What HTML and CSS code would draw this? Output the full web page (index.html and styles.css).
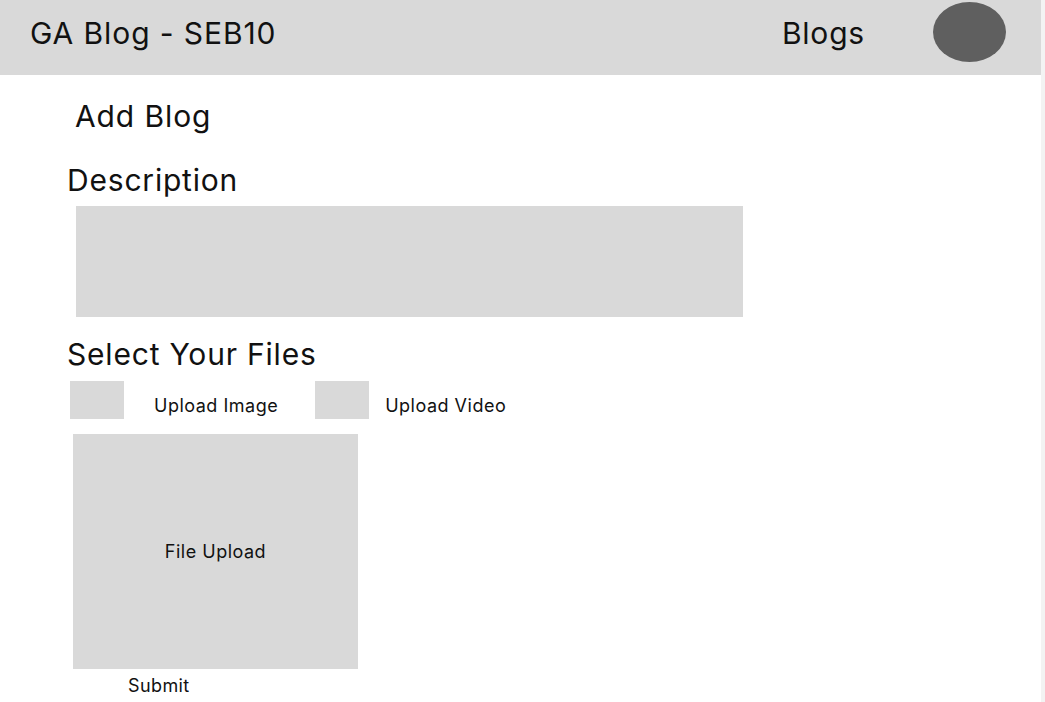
FILE: index.html
```html
<!DOCTYPE html>
<html lang="en">
<head>
<meta charset="utf-8">
<title>GA Blog - SEB10</title>
<link rel="stylesheet" href="styles.css">
</head>
<body>
<div class="page">
  <header class="topbar">
    <div class="brand">GA Blog - SEB10</div>
    <nav class="nav">
      <a class="nav-link">Blogs</a>
      <div class="avatar"></div>
    </nav>
  </header>
  <main class="content">
    <h1 class="page-title">Add Blog</h1>
    <h2 class="section-title">Description</h2>
    <div class="description-box"></div>
    <h2 class="section-title files-title">Select Your Files</h2>
    <div class="upload-options">
      <div class="option-box"></div>
      <span class="option-label label-image">Upload Image</span>
      <div class="option-box"></div>
      <span class="option-label label-video">Upload Video</span>
    </div>
    <div class="file-upload">File Upload</div>
    <div class="submit">Submit</div>
  </main>
</div>
</body>
</html>
```

FILE: styles.css
```css
html {
  background: #f3f3f3;
}
body {
  margin: 0;
  font-family: Inter, "Noto Sans", sans-serif;
  color: #111;
}
.page {
  width: 1041px;
  min-height: 702px;
  background: #ffffff;
}
.topbar {
  height: 75px;
  background: #d9d9d9;
  display: flex;
  justify-content: space-between;
  align-items: flex-start;
}
.brand {
  font-size: 30px;
  line-height: 36px;
  letter-spacing: 0.9px;
  margin: 15px 0 0 30px;
}
.nav {
  display: flex;
  align-items: flex-start;
}
.nav-link {
  font-size: 30px;
  line-height: 36px;
  letter-spacing: 0.8px;
  margin-top: 15px;
}
.avatar {
  width: 73px;
  height: 60px;
  border-radius: 50%;
  background: #5f5f5f;
  margin: 2px 35px 0 68px;
}
.content {
  display: flex;
  flex-direction: column;
  align-items: flex-start;
}
.page-title {
  font-size: 30px;
  font-weight: 400;
  line-height: 36px;
  letter-spacing: 0.9px;
  margin: 23px 0 0 75px;
}
.section-title {
  font-size: 30px;
  font-weight: 400;
  line-height: 36px;
  letter-spacing: 0.8px;
  margin: 28px 0 0 67px;
}
.files-title {
  margin-top: 19px;
}
.description-box {
  width: 667px;
  height: 111px;
  background: #d9d9d9;
  margin: 8px 0 0 76px;
}
.upload-options {
  display: flex;
  align-items: flex-start;
  margin: 9px 0 0 70px;
}
.option-box {
  width: 54px;
  height: 38px;
  background: #d9d9d9;
}
.option-label {
  font-size: 18px;
  line-height: 22px;
  letter-spacing: 0.5px;
  margin-top: 14px;
}
.label-image {
  margin-left: 30px;
  margin-right: 37px;
}
.label-video {
  margin-left: 16px;
}
.file-upload {
  width: 285px;
  height: 235px;
  background: #d9d9d9;
  margin: 15px 0 0 73px;
  display: flex;
  align-items: center;
  justify-content: center;
  font-size: 18px;
  letter-spacing: 0.5px;
}
.submit {
  font-size: 18px;
  line-height: 22px;
  letter-spacing: 0.4px;
  margin: 6px 0 0 128px;
}
```
